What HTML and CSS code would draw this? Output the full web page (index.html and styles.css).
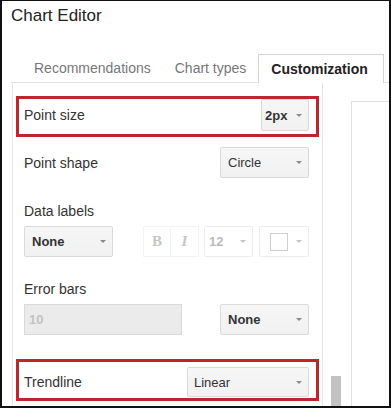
FILE: index.html
```html
<!DOCTYPE html>
<html lang="en">
<head>
  <meta charset="UTF-8">
  <title>Chart Editor</title>
  <link rel="stylesheet" href="styles.css">
</head>
<body>

  <div class="editor">
    <div class="title">Chart Editor</div>

    <div class="tabs">
      <div class="tab">Recommendations</div>
      <div class="tab">Chart types</div>
      <div class="tab active">Customization</div>
    </div>

    <div class="main">
      <div class="panel">

        <div class="row inline hl row-size">
          <span class="label">Point size</span>
          <div class="dd dd-size bold"><span>2px</span><span class="arrow"></span></div>
        </div>

        <div class="row inline row-shape">
          <span class="label">Point shape</span>
          <div class="dd dd-wide"><span>Circle</span><span class="arrow"></span></div>
        </div>

        <div class="row row-labels">
          <div class="label">Data labels</div>
          <div class="controls">
            <div class="dd dd-wide bold"><span>None</span><span class="arrow"></span></div>
            <div class="tool tool-b">B</div>
            <div class="tool tool-i">I</div>
            <div class="dd dd-font off"><span>12</span><span class="arrow"></span></div>
            <div class="dd dd-color off"><span class="swatch"></span><span class="arrow"></span></div>
          </div>
        </div>

        <div class="row row-errors">
          <div class="label">Error bars</div>
          <div class="controls">
            <input class="num" type="text" value="10" disabled>
            <div class="dd dd-wide bold push"><span>None</span><span class="arrow"></span></div>
          </div>
        </div>

        <div class="row inline hl row-trend">
          <span class="label">Trendline</span>
          <div class="dd dd-trend"><span>Linear</span><span class="arrow"></span></div>
        </div>

      </div>

      <div class="scroll">
        <div class="thumb"></div>
      </div>

      <div class="preview"></div>
    </div>
  </div>

</body>
</html>
```

FILE: styles.css
```css
body {
  margin: 0;
  font-family: "Liberation Sans", Arial, sans-serif;
  background: #fff;
}

.editor {
  width: 391px;
  height: 408px;
  box-sizing: border-box;
  border: 2px solid #111;
  border-top-width: 1px;
  overflow: hidden;
  display: flex;
  flex-direction: column;
}

.title {
  font-size: 17px;
  line-height: 20px;
  padding: 5px 0 0 9px;
  color: #222;
}

/* tab strip */
.tabs {
  display: flex;
  align-items: flex-end;
  height: 28px;
  margin: 28px 0 0 9px;
  padding-left: 11px;
  border-bottom: 1px solid #e3e3e3;
}

.tab {
  flex-shrink: 0;
  padding: 0 12px;
  line-height: 28px;
  font-size: 14px;
  color: #777;
}

.tab.active {
  height: 29px;
  box-sizing: border-box;
  border: 1px solid #d4d4d4;
  border-bottom: 0;
  margin-bottom: -1px;
  padding: 0 15px 0 12px;
  background: #fff;
  color: #222;
  font-weight: bold;
}

/* body */
.main {
  flex: 1;
  display: flex;
  min-height: 0;
}

.panel {
  width: 309px;
  flex-shrink: 0;
  margin-left: 10px;
  border-left: 1px solid #e6e6e6;
  border-right: 1px solid #e6e6e6;
}

.row {
  margin: 0 3px;
  padding: 0 7px 0 5px;
  border: 3px solid transparent;
}

.row.inline {
  display: flex;
  align-items: center;
  justify-content: space-between;
}

.row.hl {
  border-color: #be262c;
}

.row-size { margin-top: 13px; padding-bottom: 3px; }
.row-shape { margin-top: 7px; }
.row-labels { margin-top: 19px; }
.row-errors { margin-top: 18px; }
.row-trend { margin-top: 21px; padding-top: 5px; padding-bottom: 1px; }

.label {
  display: block;
  font-size: 14px;
  line-height: 16px;
  color: #333;
}

.controls {
  display: flex;
  margin-top: 7px;
}

/* dropdown buttons */
.dd {
  display: flex;
  align-items: center;
  justify-content: space-between;
  box-sizing: border-box;
  height: 31px;
  padding: 0 6px 0 7px;
  border: 1px solid #dadada;
  border-radius: 2px;
  background: linear-gradient(#f6f6f6, #f1f1f1);
  font-size: 13px;
  color: #333;
}

.dd.bold {
  font-weight: bold;
}

.arrow {
  width: 0;
  height: 0;
  border-left: 3px solid transparent;
  border-right: 3px solid transparent;
  border-top: 3px solid #8a8a8a;
}

.dd-size { width: 48px; height: 32px; padding-left: 3px; }
.dd-wide { width: 89px; }
.dd-trend { width: 122px; height: 30px; padding-left: 6px; }
.push { margin-left: auto; }

.dd.off {
  background: #fff;
  border-color: #ededed;
  color: #bbb;
}

.dd.off .arrow {
  border-top-color: #c4c4c4;
}

.dd-font {
  width: 49px;
  margin-left: 5px;
  padding-left: 4px;
  font-weight: bold;
}

.dd-color {
  width: 50px;
  margin-left: 6px;
  padding-left: 10px;
}

.swatch {
  width: 18px;
  height: 18px;
  box-sizing: border-box;
  border: 1px solid #cfcfcf;
  background: #fff;
}

.tool {
  width: 28px;
  height: 31px;
  box-sizing: border-box;
  border: 1px solid #f3f3f3;
  display: flex;
  align-items: center;
  justify-content: center;
  font-family: "Liberation Serif", "Times New Roman", serif;
  font-size: 15px;
  font-weight: bold;
  color: #c6c6c6;
}

.tool-b { margin-left: 30px; }
.tool-i { font-style: italic; border-left: 0; }

.num {
  width: 158px;
  height: 31px;
  box-sizing: border-box;
  margin: 0;
  padding: 0 0 0 4px;
  border: 1px solid #d9d9d9;
  background: #ebebeb;
  font-family: "Liberation Sans", Arial, sans-serif;
  font-size: 13px;
  font-weight: bold;
  color: #c2c2c2;
  -webkit-text-fill-color: #c2c2c2;
}

/* scroll track and chart preview */
.scroll {
  width: 28px;
  flex-shrink: 0;
  display: flex;
  flex-direction: column;
  justify-content: flex-end;
}

.thumb {
  width: 10px;
  height: 30px;
  margin-left: 8px;
  background: #c2c2c2;
}

.preview {
  flex: 1;
  margin-top: 18px;
  border-left: 1px solid #e0e0e0;
  border-top: 1px solid #e0e0e0;
}
```
